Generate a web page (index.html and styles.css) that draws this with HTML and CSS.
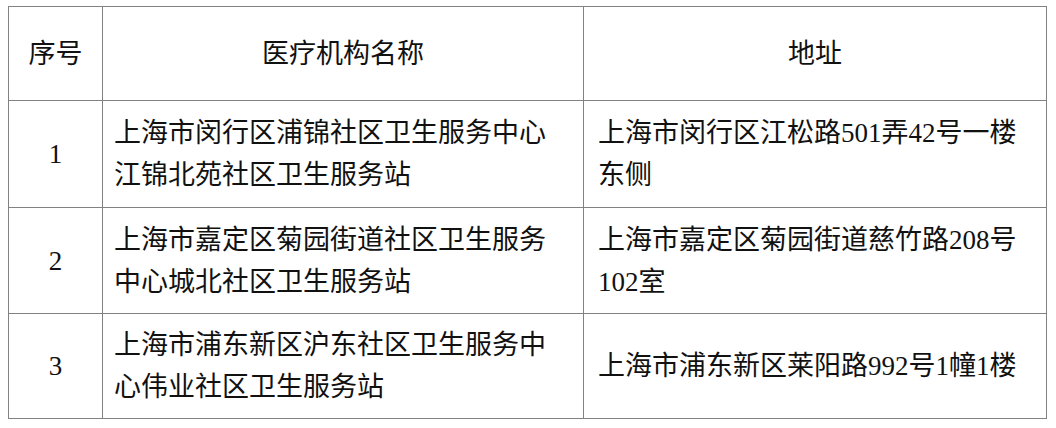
FILE: index.html
```html
<!DOCTYPE html>
<html lang="zh-CN">
<head>
<meta charset="utf-8">
<title>医疗机构</title>
<link rel="stylesheet" href="styles.css">
</head>
<body>
<table class="grid">
  <colgroup>
    <col class="c-no">
    <col class="c-name">
    <col class="c-addr">
  </colgroup>
  <thead>
    <tr class="r-head">
      <th>序号</th>
      <th>医疗机构名称</th>
      <th>地址</th>
    </tr>
  </thead>
  <tbody>
    <tr class="r-1">
      <td class="no">1</td>
      <td class="txt">上海市闵行区浦锦社区卫生服务中心江锦北苑社区卫生服务站</td>
      <td class="txt addr">上海市闵行区江松路501弄42号一楼东侧</td>
    </tr>
    <tr class="r-2">
      <td class="no">2</td>
      <td class="txt">上海市嘉定区菊园街道社区卫生服务中心城北社区卫生服务站</td>
      <td class="txt addr">上海市嘉定区菊园街道慈竹路208号102室</td>
    </tr>
    <tr class="r-3">
      <td class="no">3</td>
      <td class="txt">上海市浦东新区沪东社区卫生服务中心伟业社区卫生服务站</td>
      <td class="txt addr">上海市浦东新区莱阳路992号1幢1楼</td>
    </tr>
  </tbody>
</table>
</body>
</html>
```

FILE: styles.css
```css
html, body {
  margin: 0;
  padding: 0;
  background: #ffffff;
}

body {
  padding: 6px 0 0 8px;
  font-family: "Liberation Serif", "Noto Sans CJK SC", serif;
  color: #111111;
}

.grid {
  border-collapse: collapse;
  table-layout: fixed;
  width: 1038px;
  font-size: 27px;
  line-height: 42px;
}

.c-no { width: 94px; }
.c-name { width: 481px; }
.c-addr { width: 463px; }

.grid th,
.grid td {
  border: 1px solid #828282;
  vertical-align: middle;
  padding: 0;
}

.grid th {
  font-weight: normal;
  text-align: center;
}

.r-head { height: 94px; }
.r-1 { height: 107px; }
.r-2 { height: 106px; }
.r-3 { height: 105px; }

.no {
  text-align: center;
}

.txt {
  text-align: left;
  padding: 0 20px 0 11px !important;
}

.txt.addr {
  padding: 0 20px 0 14px !important;
}
```
